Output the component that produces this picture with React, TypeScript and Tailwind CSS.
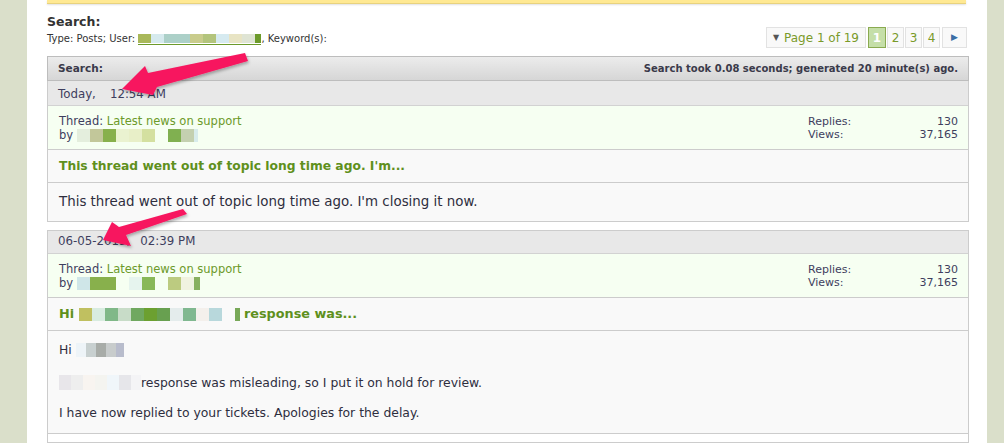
import React from "react";

type Px = { c: string; w?: number };

const Pixels = ({ items, h = 13 }: { items: Px[]; h?: number }) => (
  <span className="inline-flex align-middle">
    {items.map((p, i) => (
      <span
        key={i}
        className="inline-block"
        style={{ backgroundColor: p.c, width: p.w ?? 13, height: h }}
      />
    ))}
  </span>
);

const userPx: Px[] = [
  { c: "#a9b85a" },
  { c: "#d6eaee" },
  { c: "#acd0c8" },
  { c: "#acd0c8" },
  { c: "#c9cc8c" },
  { c: "#b3c47c" },
  { c: "#d6eaf0" },
  { c: "#e8e4c4" },
  { c: "#dfe4d4" },
  { c: "#6c9a2a", w: 6 },
];

const by1: Px[] = [
  { c: "#e4eedd" },
  { c: "#c2c79a" },
  { c: "#88b04c" },
  { c: "#eaf2d0" },
  { c: "#e8efc8" },
  { c: "#d4e0a0" },
  { c: "transparent" },
  { c: "#80b050" },
  { c: "#c4d0b0" },
  { c: "#d8ecec", w: 4 },
];

const by2: Px[] = [
  { c: "#cfe6e8" },
  { c: "#88b04c", w: 26 },
  { c: "transparent" },
  { c: "#e6f4ee" },
  { c: "#88b858" },
  { c: "transparent" },
  { c: "#bccb80" },
  { c: "#f0f2e0" },
  { c: "#88b060", w: 6 },
];

const title2: Px[] = [
  { c: "#c0c060" },
  { c: "#d8ece0" },
  { c: "#80b888" },
  { c: "#c8dcc8" },
  { c: "#70a860" },
  { c: "#6ca030" },
  { c: "#68a050" },
  { c: "#e4ecec" },
  { c: "#80b890" },
  { c: "#f4f0ec" },
  { c: "#b8d8dc" },
  { c: "transparent", w: 13 },
  { c: "#78a858", w: 5 },
];

const hiPx: Px[] = [
  { c: "#eef4f8", w: 10 },
  { c: "#c8d0d0", w: 10 },
  { c: "#a8aca8", w: 10 },
  { c: "#c8cccc", w: 10 },
  { c: "#b8bccc", w: 8 },
];

const respPx: Px[] = [
  { c: "#e8e6ea", w: 12 },
  { c: "#eeeeee", w: 12 },
  { c: "#f8f4f0", w: 12 },
  { c: "#f4f4f0", w: 12 },
  { c: "#f0f6fa", w: 12 },
  { c: "#e6e6ea", w: 12 },
  { c: "#f4f4f6", w: 10 },
];

const Stats = () => (
  <div className="w-[150px] text-[11px] leading-[13px] text-[#3e3e5e] pt-[1px]">
    <div className="flex justify-between">
      <span>Replies:</span>
      <span>130</span>
    </div>
    <div className="flex justify-between">
      <span>Views:</span>
      <span>37,165</span>
    </div>
  </div>
);

const PageBox = ({ n, active }: { n: string; active?: boolean }) =>
  active ? (
    <div className="w-[18px] h-[21px] flex items-center justify-center bg-[#c5dfa8] border border-[#8aaa50] text-white font-bold">
      {n}
    </div>
  ) : (
    <div className="w-[17px] h-[21px] flex items-center justify-center bg-[#f9f9f9] border border-[#e2e2e2] text-[#7a9a2a]">
      {n}
    </div>
  );

export default function App() {
  return (
    <div className="relative w-[1004px] h-[443px] overflow-hidden flex bg-[#dadfca] font-['DejaVu_Sans',sans-serif] text-[#333]">
      <div className="w-[27px] shrink-0" />
      <div className="w-[960px] shrink-0 bg-white pl-[20px] pr-[19px]">
        <div className="w-[919px] h-[4px] bg-[#ffe993] border-b border-[#e8d27e] shadow-[0_1px_2px_rgba(0,0,0,0.12)]" />

        <div className="flex justify-between items-start h-[44px]">
          <div>
            <div className="mt-[10px] text-[12.5px] leading-[16px] font-bold text-[#333]">
              Search:
            </div>
            <div className="mt-[3px] text-[10px] leading-[12px] flex items-center text-[#333]">
              <span>Type: Posts; User:&nbsp;</span>
              <span className="border-b border-[#6c9a2a] pb-[1px] flex">
                <Pixels items={userPx} h={9} />
              </span>
              <span>, Keyword(s):</span>
            </div>
          </div>
          <div className="mt-[23px] flex gap-[1px] text-[12px] mr-[1px]">
            <div className="h-[21px] px-[6px] flex items-center gap-[5px] bg-[#f9f9f9] border border-[#e2e2e2] text-[#7a9a2a] mr-[1px]">
              <span className="text-[8px] text-[#555]">▼</span>
              <span>Page 1 of 19</span>
            </div>
            <PageBox n="1" active />
            <PageBox n="2" />
            <PageBox n="3" />
            <PageBox n="4" />
            <div className="w-[25px] h-[21px] ml-[1px] flex items-center justify-center bg-[#f9f9f9] border border-[#e2e2e2] text-[#3a6ea5] text-[9px]">
              ▶
            </div>
          </div>
        </div>

        <div className="mt-[8px] w-[922px] h-[25px] border border-[#bdbdbd] bg-gradient-to-b from-[#ececec] to-[#d6d6d6] flex items-center justify-between px-[10px] font-bold text-[#3a3a4a]">
          <span className="text-[10.5px]">Search:</span>
          <span className="text-[10px]">Search took 0.08 seconds; generated 20 minute(s) ago.</span>
        </div>

        {/* post 1 */}
        <div className="w-[922px] border-x border-[#cccccc]">
          <div className="h-[25px] bg-[#e8e8e8] border-b border-[#d2d2d2] flex items-center pt-[3px] pl-[10px] text-[11.8px] text-[#3e3e5e]">
            <span>Today,</span>
            <span className="ml-[14px]">12:54 AM</span>
          </div>
          <div className="h-[44px] bg-[#f6fff2] border-b border-[#cccccc] flex justify-between pl-[11px] pr-[10px] pt-[8px]">
            <div className="text-[11.5px] leading-[14px] text-[#3e3e5e]">
              <div>
                Thread: <span className="text-[#6c9a2a]">Latest news on support</span>
              </div>
              <div className="flex items-center">
                <span>by&nbsp;</span>
                <Pixels items={by1} />
              </div>
            </div>
            <Stats />
          </div>
          <div className="h-[33px] bg-[#f9f9f9] border-b border-[#cccccc] flex items-center pl-[11px] text-[12.3px] font-bold text-[#5f901c]">
            This thread went out of topic long time ago. I'm...
          </div>
          <div className="h-[39px] bg-[#f9f9f9] border-b border-[#cccccc] flex items-center pl-[11px] text-[13.4px] text-[#2e2e3e]">
            This thread went out of topic long time ago. I'm closing it now.
          </div>
        </div>

        {/* post 2 */}
        <div className="mt-[8px] w-[922px] border border-[#cccccc] border-b-0">
          <div className="h-[23px] bg-[#e8e8e8] border-b border-[#d2d2d2] flex items-center pl-[10px] text-[11.8px] text-[#3e3e5e]">
            <span>06-05-2013,</span>
            <span className="ml-[10px]">02:39 PM</span>
          </div>
          <div className="h-[44px] bg-[#f6fff2] border-b border-[#cccccc] flex justify-between pl-[11px] pr-[10px] pt-[8px]">
            <div className="text-[11.5px] leading-[14px] text-[#3e3e5e]">
              <div>
                Thread: <span className="text-[#6c9a2a]">Latest news on support</span>
              </div>
              <div className="flex items-center">
                <span>by&nbsp;</span>
                <Pixels items={by2} />
              </div>
            </div>
            <Stats />
          </div>
          <div className="h-[33px] bg-[#f9f9f9] border-b border-[#cccccc] flex items-center pl-[11px] text-[12.8px] font-bold text-[#5f901c]">
            <span>Hi&nbsp;</span>
            <Pixels items={title2} />
            <span>&nbsp;response was...</span>
          </div>
          <div className="h-[103px] bg-[#f9f9f9] border-b border-[#cccccc] pl-[11px] pt-[12px] text-[12.4px] text-[#2e2e3e] leading-[14px]">
            <div className="flex items-center">
              <span>Hi&nbsp;</span>
              <Pixels items={hiPx} h={14} />
            </div>
            <div className="mt-[18px] flex items-end">
              <Pixels items={respPx} h={15} />
              <span>response was misleading, so I put it on hold for review.</span>
            </div>
            <div className="mt-[16px]">
              I have now replied to your tickets. Apologies for the delay.
            </div>
          </div>
          <div className="h-[8px]" />
          <div className="h-[4px] border-t border-[#cccccc] bg-[#e8e8e8]" />
        </div>
      </div>
      <div className="flex-1" />

      <svg
        className="absolute inset-0 pointer-events-none"
        width="1004"
        height="443"
        viewBox="0 0 1004 443"
      >
        <defs>
          <filter id="sh" x="-20%" y="-20%" width="140%" height="140%">
            <feDropShadow dx="1" dy="2" stdDeviation="1.5" floodColor="#000" floodOpacity="0.3" />
          </filter>
        </defs>
        <g fill="#f7155f" filter="url(#sh)">
          <polygon points="122,89 145,66 148,73 245,53 248,61 157,87 153,95" />
          <polygon points="103,240 112,222 119,227 183,209 187,214 126,235 131,246" />
        </g>
      </svg>
    </div>
  );
}
